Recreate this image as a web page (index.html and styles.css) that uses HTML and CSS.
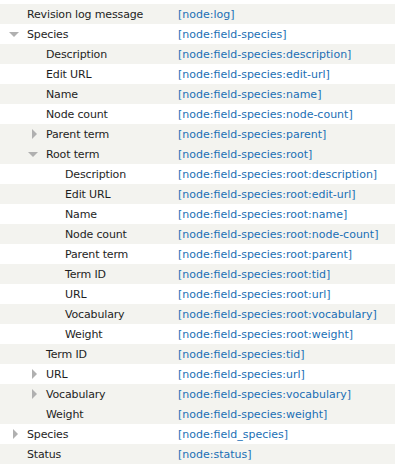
FILE: index.html
```html
<!DOCTYPE html>
<html>
<head>
<meta charset="utf-8">
<link rel="stylesheet" href="styles.css">
</head>
<body>
<table class="tree">
  <tr class="odd"><td class="name l0"><span class="lbl">Revision log message</span></td><td class="tok">[node:log]</td></tr>
  <tr class="even"><td class="name l0"><span class="exp down"></span><span class="lbl">Species</span></td><td class="tok">[node:field-species]</td></tr>
  <tr class="odd"><td class="name l1"><span class="lbl">Description</span></td><td class="tok">[node:field-species:description]</td></tr>
  <tr class="even"><td class="name l1"><span class="lbl">Edit URL</span></td><td class="tok">[node:field-species:edit-url]</td></tr>
  <tr class="odd"><td class="name l1"><span class="lbl">Name</span></td><td class="tok">[node:field-species:name]</td></tr>
  <tr class="even"><td class="name l1"><span class="lbl">Node count</span></td><td class="tok">[node:field-species:node-count]</td></tr>
  <tr class="odd"><td class="name l1"><span class="exp right"></span><span class="lbl">Parent term</span></td><td class="tok">[node:field-species:parent]</td></tr>
  <tr class="odd"><td class="name l1"><span class="exp down"></span><span class="lbl">Root term</span></td><td class="tok">[node:field-species:root]</td></tr>
  <tr class="even"><td class="name l2"><span class="lbl">Description</span></td><td class="tok">[node:field-species:root:description]</td></tr>
  <tr class="odd"><td class="name l2"><span class="lbl">Edit URL</span></td><td class="tok">[node:field-species:root:edit-url]</td></tr>
  <tr class="even"><td class="name l2"><span class="lbl">Name</span></td><td class="tok">[node:field-species:root:name]</td></tr>
  <tr class="odd"><td class="name l2"><span class="lbl">Node count</span></td><td class="tok">[node:field-species:root:node-count]</td></tr>
  <tr class="even"><td class="name l2"><span class="lbl">Parent term</span></td><td class="tok">[node:field-species:root:parent]</td></tr>
  <tr class="odd"><td class="name l2"><span class="lbl">Term ID</span></td><td class="tok">[node:field-species:root:tid]</td></tr>
  <tr class="even"><td class="name l2"><span class="lbl">URL</span></td><td class="tok">[node:field-species:root:url]</td></tr>
  <tr class="odd"><td class="name l2"><span class="lbl">Vocabulary</span></td><td class="tok">[node:field-species:root:vocabulary]</td></tr>
  <tr class="even"><td class="name l2"><span class="lbl">Weight</span></td><td class="tok">[node:field-species:root:weight]</td></tr>
  <tr class="odd"><td class="name l1"><span class="lbl">Term ID</span></td><td class="tok">[node:field-species:tid]</td></tr>
  <tr class="even"><td class="name l1"><span class="exp right"></span><span class="lbl">URL</span></td><td class="tok">[node:field-species:url]</td></tr>
  <tr class="odd"><td class="name l1"><span class="exp right"></span><span class="lbl">Vocabulary</span></td><td class="tok">[node:field-species:vocabulary]</td></tr>
  <tr class="odd"><td class="name l1"><span class="lbl">Weight</span></td><td class="tok">[node:field-species:weight]</td></tr>
  <tr class="even"><td class="name l0"><span class="exp right"></span><span class="lbl">Species</span></td><td class="tok">[node:field_species]</td></tr>
  <tr class="odd"><td class="name l0"><span class="lbl">Status</span></td><td class="tok">[node:status]</td></tr>
</table>
</body>
</html>
```
FILE: styles.css
```css
html, body {
  margin: 0;
  padding: 0;
  background: #ffffff;
}
body {
  padding-top: 4px;
  font-family: "DejaVu Sans", sans-serif;
  font-size: 11px;
  color: #1e1e1e;
}
.tree {
  width: 100%;
  border-collapse: collapse;
  border-spacing: 0;
  table-layout: fixed;
}
.tree tr {
  height: 20px;
}
.tree td {
  padding: 0;
  height: 20px;
  white-space: nowrap;
  vertical-align: middle;
  box-sizing: border-box;
}
.odd {
  background: #f3f3ef;
}
.even {
  background: #ffffff;
}
.name {
  width: 178px;
  position: relative;
}
.l0 { padding-left: 27px !important; }
.l1 { padding-left: 46px !important; }
.l2 { padding-left: 65px !important; }
.lbl {
  display: inline-block;
  letter-spacing: -0.15px;
}
.tok {
  color: #1a6fb5;
}
.exp {
  position: absolute;
  width: 0;
  height: 0;
}
.exp.down {
  top: 8px;
  border-left: 5px solid transparent;
  border-right: 5px solid transparent;
  border-top: 5px solid #b0b0b0;
}
.l0 .exp.down { left: 9px; }
.l1 .exp.down { left: 28px; }
.exp.right {
  top: 5px;
  border-top: 5px solid transparent;
  border-bottom: 5px solid transparent;
  border-left: 5px solid #b0b0b0;
}
.l0 .exp.right { left: 13px; }
.l1 .exp.right { left: 32px; }
```
